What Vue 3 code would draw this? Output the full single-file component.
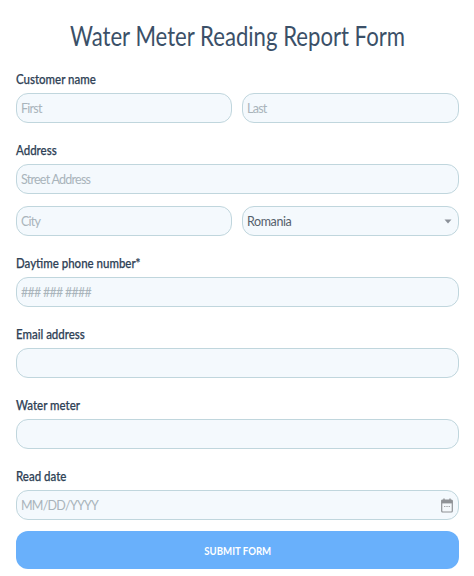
<script setup>
const title = 'Water Meter Reading Report Form'
</script>

<template>
  <form class="report-form" @submit.prevent>
    <h1 class="form-title">{{ title }}</h1>

    <div class="field">
      <label class="field-label">Customer name</label>
      <div class="two-col">
        <input class="input" type="text" placeholder="First" />
        <input class="input" type="text" placeholder="Last" />
      </div>
    </div>

    <div class="field address">
      <label class="field-label">Address</label>
      <input class="input" type="text" placeholder="Street Address" />
      <div class="two-col">
        <input class="input" type="text" placeholder="City" />
        <div class="select-wrap">
          <select class="input select">
            <option>Romania</option>
          </select>
          <svg class="caret" width="8" height="5" viewBox="0 0 8 5">
            <path d="M0.5 0.5h7L4 4.5z" fill="#8b9199" />
          </svg>
        </div>
      </div>
    </div>

    <div class="field">
      <label class="field-label">Daytime phone number*</label>
      <input class="input" type="text" placeholder="### ### ####" />
    </div>

    <div class="field">
      <label class="field-label">Email address</label>
      <input class="input" type="text" />
    </div>

    <div class="field">
      <label class="field-label">Water meter</label>
      <input class="input" type="text" />
    </div>

    <div class="field">
      <label class="field-label">Read date</label>
      <div class="date-wrap">
        <input class="input" type="text" placeholder="MM/DD/YYYY" />
        <svg class="calendar" width="12" height="15" viewBox="0 0 12 15">
          <path d="M3 0.5v2M9 0.5v2" stroke="#8f9296" stroke-width="1.4" />
          <rect x="0.7" y="2" width="10.6" height="12" rx="1" fill="#f4f8fb" stroke="#8f9296" stroke-width="1.2" />
          <rect x="0.7" y="2" width="10.6" height="3.4" fill="#8f9296" />
          <path d="M3 8.5h1.4M5.3 8.5h1.4M7.6 8.5h1.4" stroke="#a3a6aa" stroke-width="1.2" />
        </svg>
      </div>
    </div>

    <button class="submit" type="submit"><span class="submit-text">SUBMIT FORM</span></button>
  </form>
</template>

<style>
html,
body {
  margin: 0;
  background: #ffffff;
}
</style>

<style scoped>
.report-form {
  width: 474px;
  height: 576px;
  box-sizing: border-box;
  padding: 19px 15px 0 16px;
  font-family: Lato, "Open Sans", sans-serif;
  overflow: hidden;
}

/* the reference type is narrow, so the wider font gets squeezed a bit */
.form-title {
  margin: 0 0 18px;
  height: 34px;
  line-height: 34px;
  font-size: 27px;
  font-weight: 400;
  text-align: center;
  color: #3b5068;
  transform: scaleX(0.82);
  white-space: nowrap;
}

.field {
  display: flex;
  flex-direction: column;
  margin-bottom: 19px;
}

.address .two-col {
  margin-top: 12px;
}

.field-label {
  height: 16px;
  line-height: 16px;
  margin-bottom: 6px;
  font-size: 14px;
  font-weight: 500;
  color: #2f4256;
  -webkit-text-stroke: 0.25px #2f4256;
  transform: scaleX(0.82);
  transform-origin: left center;
  white-space: nowrap;
}

.two-col {
  display: grid;
  grid-template-columns: 216px 217px;
  gap: 10px;
}

.input {
  display: block;
  width: 100%;
  height: 30px;
  box-sizing: border-box;
  padding: 0 4px;
  border: 1px solid #c0d6dd;
  border-radius: 12px;
  background: #f4f9fd;
  font-family: inherit;
  font-size: 12.5px;
  letter-spacing: -0.4px;
  color: #55606c;
  outline: none;
}

.input::placeholder {
  color: #a9b4bb;
  opacity: 1;
  letter-spacing: -0.75px;
}

.select-wrap,
.date-wrap {
  position: relative;
}

.select {
  appearance: none;
}

.caret {
  position: absolute;
  right: 7px;
  top: 13px;
}

.calendar {
  position: absolute;
  right: 6px;
  top: 8px;
}

.submit {
  display: block;
  width: 443px;
  height: 38px;
  margin-top: -8px;
  border: 0;
  border-radius: 12px;
  background: #69b0fb;
  color: #ffffff;
  font-family: inherit;
  font-size: 12px;
  font-weight: 700;
}

.submit-text {
  display: inline-block;
  transform: scaleX(0.8);
}
</style>
